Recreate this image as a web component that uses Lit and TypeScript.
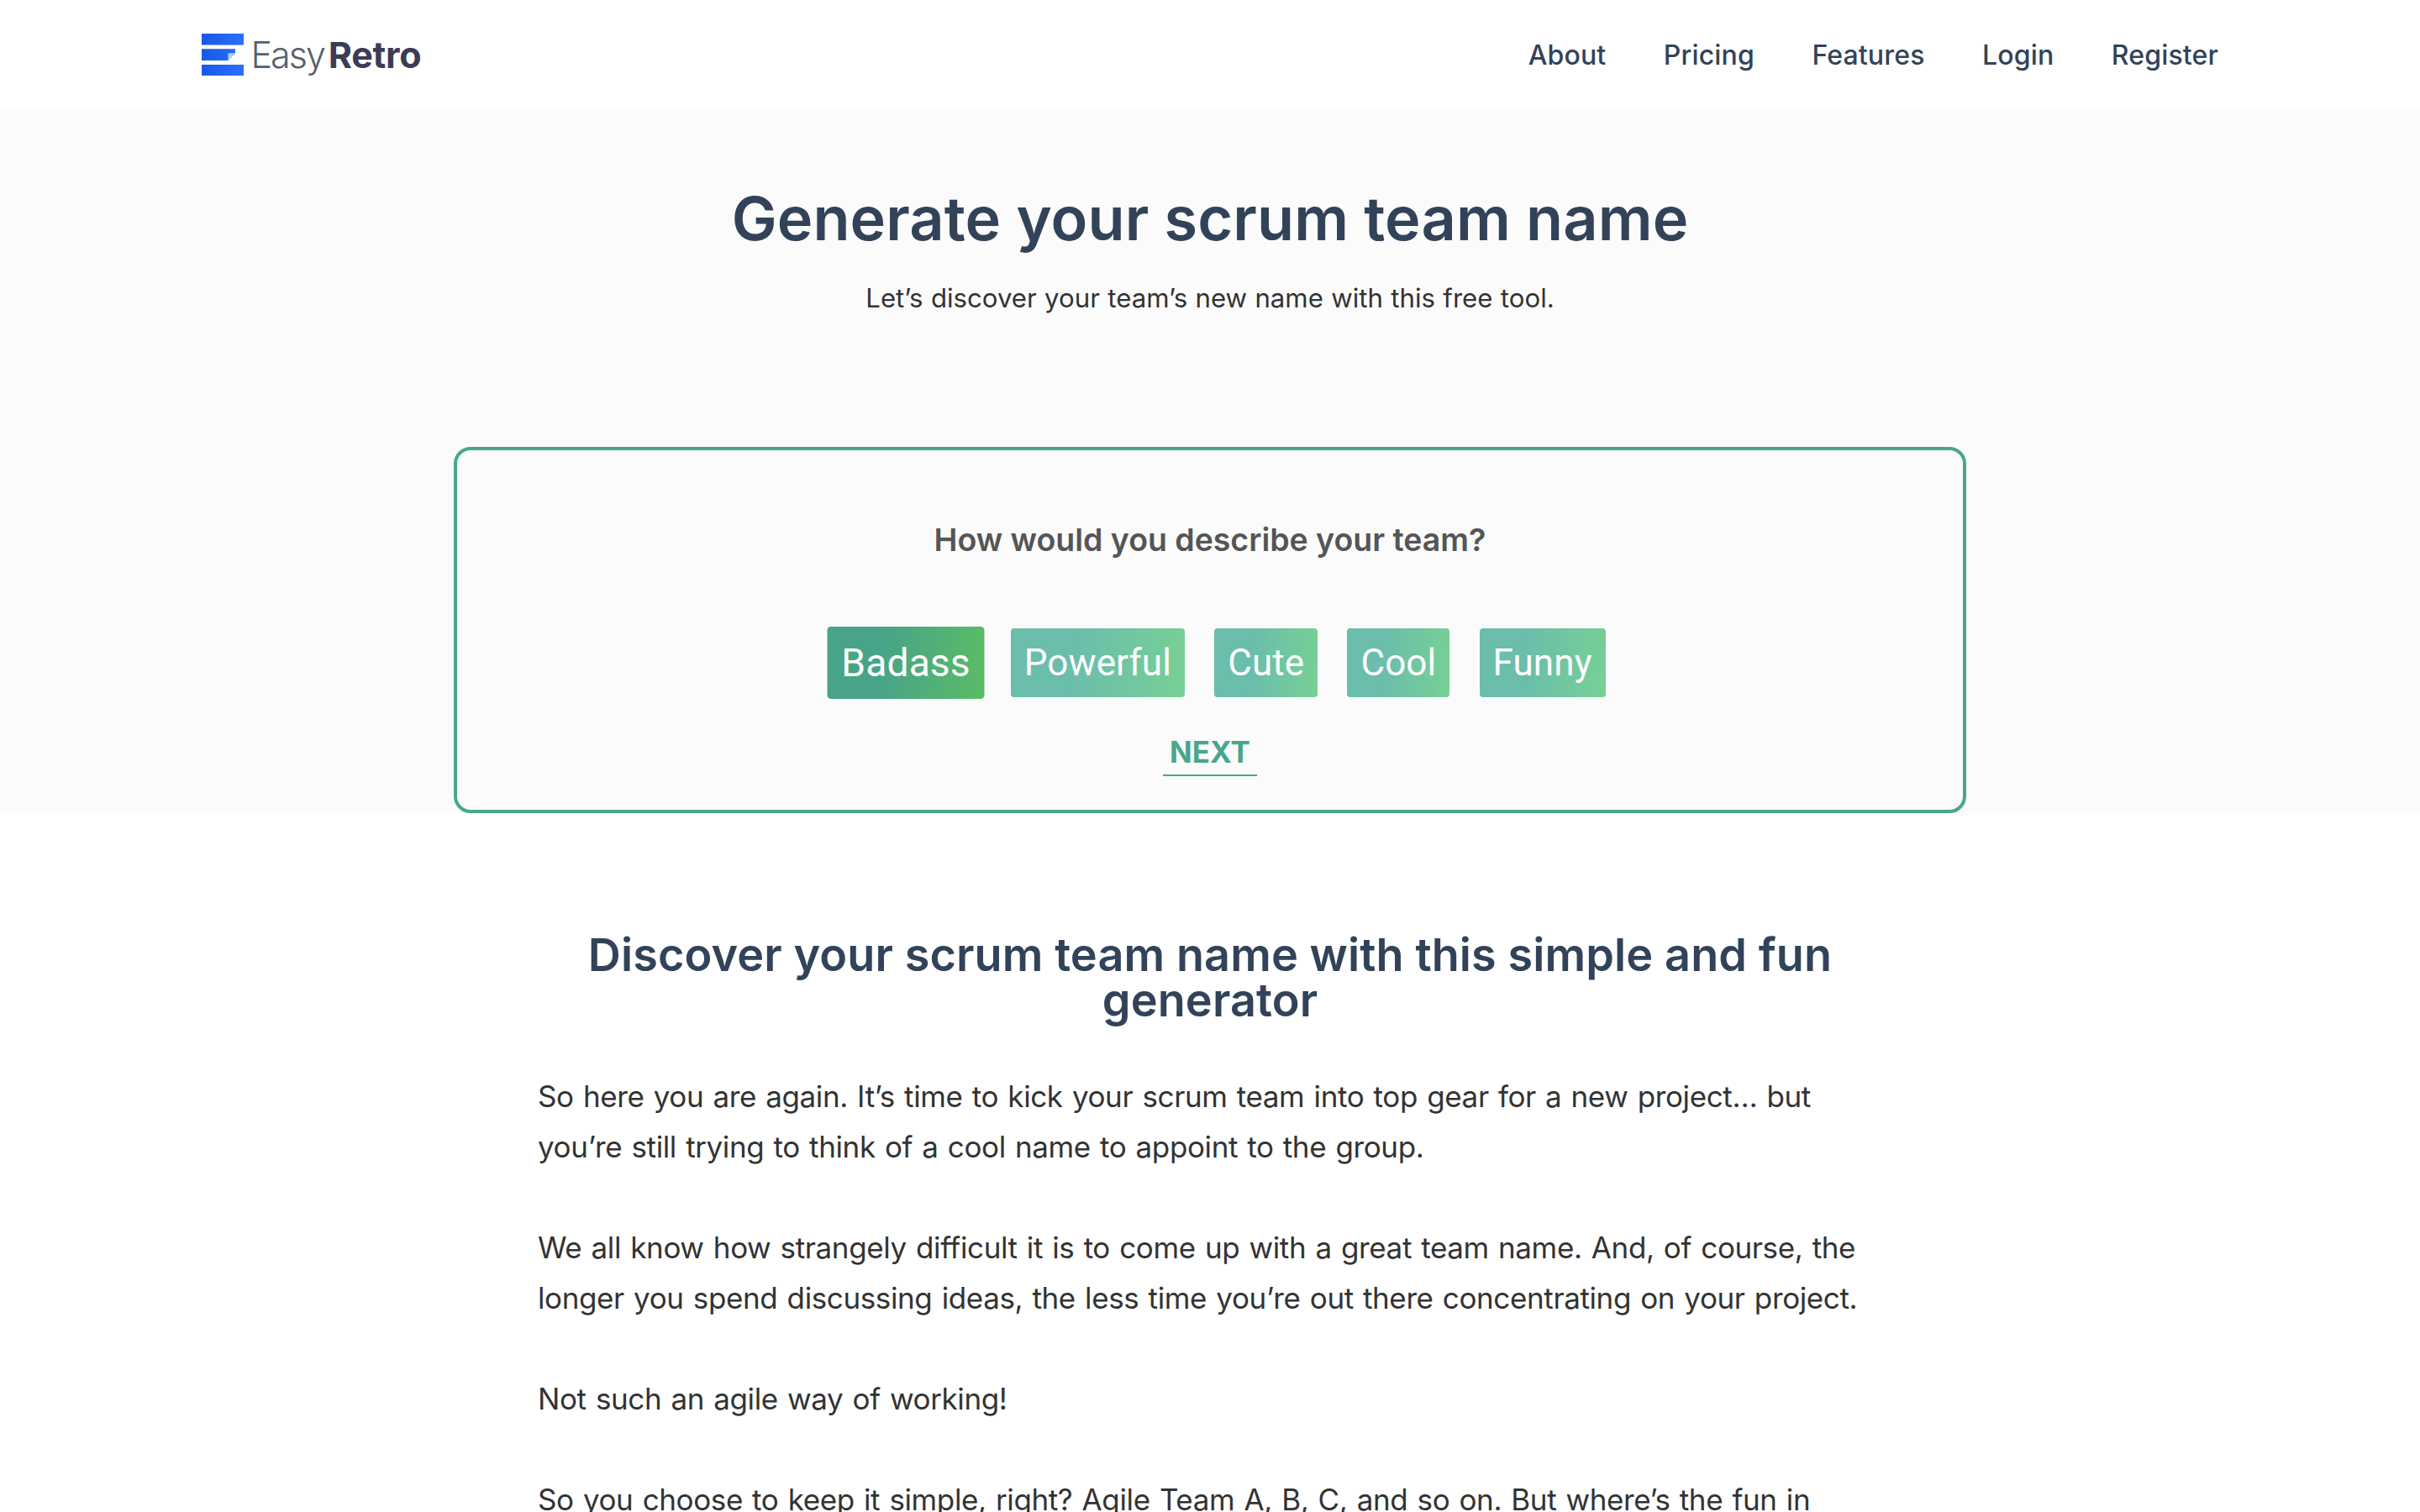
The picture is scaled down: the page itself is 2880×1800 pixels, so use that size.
import { LitElement, html, css } from "lit";
import { customElement, property, state } from "lit/decorators.js";
import { classMap } from "lit/directives/class-map.js";

@customElement("easy-logo")
export class EasyLogo extends LitElement {
  static styles = css`
    :host {
      display: flex;
      align-items: center;
      gap: 8.5px;
      height: 50px;
      font-family: Inter, sans-serif;
      font-size: 43px;
      line-height: 50px;
      white-space: nowrap;
    }
    .mark {
      display: block;
      width: 50px;
      height: 50px;
    }
    .easy {
      color: #566070;
      font-weight: 300;
      letter-spacing: -2px;
    }
    .retro {
      color: #3c3c54;
      font-weight: 700;
      letter-spacing: -0.3px;
      margin-left: -3.5px;
    }
  `;

  render() {
    return html`
      <svg class="mark" viewBox="0 0 50 50">
        <defs>
          <linearGradient id="blue" x1="0" y1="0" x2="50" y2="0" gradientUnits="userSpaceOnUse">
            <stop offset="0" stop-color="#1859e8" />
            <stop offset="1" stop-color="#2b6ffb" />
          </linearGradient>
        </defs>
        <path fill="url(#blue)" d="M0 0h50v13.5H0zM0 18.3h40v5L31.5 32H0zM0 37h50v13H0z" />
        <path fill="#b9c9fb" d="M31.5 23.3H40L31.5 32z" />
      </svg>
      <span class="easy">Easy</span>
      <span class="retro">Retro</span>
    `;
  }
}

@customElement("site-header")
export class SiteHeader extends LitElement {
  static styles = css`
    :host {
      display: flex;
      justify-content: space-between;
      align-items: center;
      box-sizing: border-box;
      height: 130px;
      padding: 0 240px;
      background: #fff;
    }
    .nav {
      display: flex;
      gap: 68.5px;
      padding-top: 1px;
    }
    .link {
      color: #324359;
      font-family: Inter, sans-serif;
      font-size: 32px;
      font-weight: 500;
      letter-spacing: 0.15px;
      line-height: 40px;
      text-decoration: none;
    }
  `;

  links = ["About", "Pricing", "Features", "Login", "Register"];

  render() {
    return html`
      <easy-logo></easy-logo>
      <nav class="nav">
        ${this.links.map((link) => html`<a class="link" href="#">${link}</a>`)}
      </nav>
    `;
  }
}

@customElement("team-quiz")
export class TeamQuiz extends LitElement {
  static styles = css`
    :host {
      display: flex;
      flex-direction: column;
      align-items: center;
      box-sizing: border-box;
      width: 1800px;
      height: 436px;
      padding-top: 83px;
      border: 4px solid #4aa68a;
      border-radius: 20px;
    }
    .question {
      margin: 0;
      color: #555;
      font-family: Inter, sans-serif;
      font-size: 37.5px;
      font-weight: 600;
      letter-spacing: -0.03px;
      line-height: 48px;
      white-space: nowrap;
    }
    .options {
      display: flex;
      gap: 35.2px;
      padding: 81px 0 0 20px;
    }
    .option {
      height: 82px;
      padding: 0 16px;
      border: 0;
      border-radius: 4px;
      background: linear-gradient(95deg, #6bbdac 35%, #77d094);
      color: #fff;
      font-family: Roboto, sans-serif;
      font-size: 44px;
      letter-spacing: 0.1px;
      line-height: 82px;
    }
    .active {
      background: linear-gradient(95deg, #48a488 35%, #5abc66);
      transform: scale(1.05);
    }
    .next {
      width: 112px;
      height: 56px;
      margin-top: 38px;
      padding: 0;
      border: 0;
      border-bottom: 2px solid #4aa68a;
      background: none;
      color: #4aa68a;
      font-family: Inter, sans-serif;
      font-size: 35px;
      font-weight: 700;
      line-height: 54px;
    }
  `;

  @property({ type: Array }) options: string[] = [];
  @state() selected = "Badass";

  render() {
    return html`
      <h3 class="question">How would you describe your team?</h3>
      <div class="options">
        ${this.options.map(
          (option) => html`
            <button
              class=${classMap({ option: true, active: option === this.selected })}
              @click=${() => (this.selected = option)}
            >${option}</button>
          `
        )}
      </div>
      <button class="next">NEXT</button>
    `;
  }
}

@customElement("app-root")
export class AppRoot extends LitElement {
  static styles = css`
    :host {
      display: block;
      height: 1800px;
      overflow: hidden;
      background: #fff;
      color: #333;
      font-family: Inter, sans-serif;
    }
    .hero {
      display: flex;
      flex-direction: column;
      align-items: center;
      box-sizing: border-box;
      height: 838px;
      padding-top: 90px;
      background: #fbfbfb;
    }
    .title {
      margin: 0;
      color: #324359;
      font-size: 72px;
      font-weight: 600;
      letter-spacing: 0.1px;
      line-height: 80px;
      white-space: nowrap;
    }
    .subtitle {
      margin: 30px 0 152px;
      font-size: 31.2px;
      line-height: 50px;
      word-spacing: 0.6px;
      white-space: nowrap;
    }
    .article {
      width: 1600px;
      margin: 0 auto;
      padding-top: 142px;
    }
    .heading {
      margin: 0 0 57px;
      color: #324359;
      font-size: 54px;
      font-weight: 600;
      letter-spacing: 0.1px;
      line-height: 54px;
      text-align: center;
      white-space: nowrap;
    }
    .text {
      margin: 0 0 60px;
      font-size: 35px;
      letter-spacing: -0.38px;
      line-height: 60px;
      word-spacing: 1.75px;
      white-space: nowrap;
    }
  `;

  options = ["Badass", "Powerful", "Cute", "Cool", "Funny"];

  render() {
    return html`
      <site-header></site-header>
      <section class="hero">
        <h1 class="title">Generate your scrum team name</h1>
        <p class="subtitle">Let’s discover your team’s new name with this free tool.</p>
        <team-quiz .options=${this.options}></team-quiz>
      </section>
      <article class="article">
        <h2 class="heading">
          Discover your scrum team name with this simple and fun<br />generator
        </h2>
        <p class="text">
          So here you are again. It’s time to kick your scrum team into top gear for a new project… but<br />
          you’re still trying to think of a cool name to appoint to the group.
        </p>
        <p class="text">
          We all know how strangely difficult it is to come up with a great team name. And, of course, the<br />
          longer you spend discussing ideas, the less time you’re out there concentrating on your project.
        </p>
        <p class="text">Not such an agile way of working!</p>
        <p class="text">
          So you choose to keep it simple, right? Agile Team A, B, C, and so on. But where’s the fun in
        </p>
      </article>
    `;
  }
}
